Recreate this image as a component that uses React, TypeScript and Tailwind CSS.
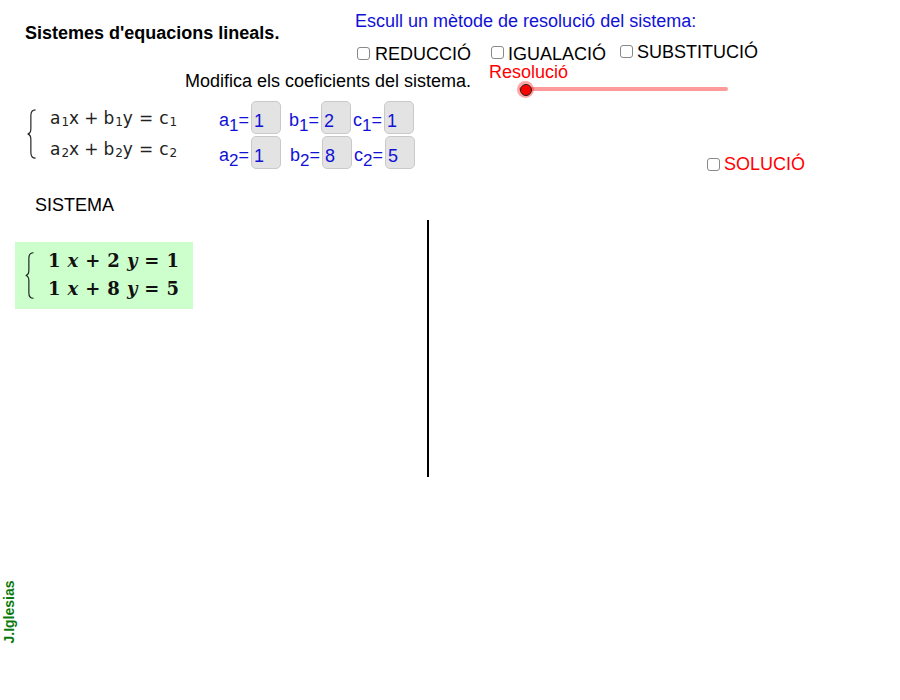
import React from "react";

const BLUE = "text-[#1111d6]";

function Brace({ className }: { className: string }) {
  return (
    <svg className={className} viewBox="0 0 10 50" preserveAspectRatio="none" fill="none">
      <path
        d="M9.5,0.8 C6,0.8 4.3,2.5 4.3,6.5 L4.3,19.5 C4.3,23 3,24.6 0.8,25 C3,25.4 4.3,27 4.3,30.5 L4.3,43.5 C4.3,47.5 6,49.2 9.5,49.2"
        stroke="#222"
        strokeWidth="1.3"
      />
    </svg>
  );
}

function CheckBox({ left, top }: { left: string; top: string }) {
  return <div className={`absolute ${left} ${top} w-[13px] h-[13px] border-[1.5px] border-[#888] rounded-[3px] bg-white`} />;
}

function Sub({ c }: { c: string }) {
  return <span className="text-[12px] relative top-[2px] ml-[1px]">{c}</span>;
}

function TemplateRow({ n }: { n: string }) {
  return (
    <div className="flex items-baseline text-[17px] leading-[20px] text-[#222] [font-family:'DejaVu_Sans',sans-serif]">
      <span>a</span>
      <Sub c={n} />
      <span>x</span>
      <span className="mx-[5px]">+</span>
      <span>b</span>
      <Sub c={n} />
      <span>y</span>
      <span className="mx-[6px]">=</span>
      <span>c</span>
      <Sub c={n} />
    </div>
  );
}

function Coef({ name, n, value, boxLeft, labelLeft, top }: { name: string; n: string; value: string; boxLeft: string; labelLeft: string; top: string }) {
  return (
    <>
      <div className={`absolute ${labelLeft} ${top} flex items-start text-[18px] leading-[20px] ${BLUE}`}>
        <span className="mt-[9px]">{name}</span>
        <span className="mt-[15px] text-[17px]">{n}</span>
        <span className="mt-[9px]">=</span>
      </div>
      <div className={`absolute ${boxLeft} ${top} w-[30px] h-[33px] rounded-[5px] bg-[#e3e3e3] border border-[#c9c9c9] pl-[2px] pt-[9px] text-[18px] leading-[20px] ${BLUE}`}>
        {value}
      </div>
    </>
  );
}

function SysRow({ a, b, c }: { a: string; b: string; c: string }) {
  return (
    <div className="flex items-baseline text-[18px] leading-[28px] font-bold text-[#111] [font-family:'DejaVu_Serif',serif]">
      <span>{a}</span>
      <span className="ml-[7px] italic">x</span>
      <span className="mx-[7px]">+</span>
      <span>{b}</span>
      <span className="ml-[7px] italic">y</span>
      <span className="mx-[7px]">=</span>
      <span>{c}</span>
    </div>
  );
}

export default function App() {
  return (
    <div className="relative w-[900px] h-[700px] bg-white overflow-hidden [font-family:'Liberation_Sans',Arial,sans-serif] text-[18px] leading-[18px] text-black">
      <div className="absolute left-[25px] top-[24px] font-bold">Sistemes d'equacions lineals.</div>
      <div className={`absolute left-[355px] top-[12px] ${BLUE}`}>Escull un mètode de resolució del sistema:</div>

      <CheckBox left="left-[357px]" top="top-[47px]" />
      <div className="absolute left-[375px] top-[45px]">REDUCCIÓ</div>
      <CheckBox left="left-[491px]" top="top-[46px]" />
      <div className="absolute left-[508px] top-[45px]">IGUALACIÓ</div>
      <CheckBox left="left-[620px]" top="top-[45px]" />
      <div className="absolute left-[637px] top-[43px]">SUBSTITUCIÓ</div>

      <div className="absolute left-[185px] top-[72px]">Modifica els coeficients del sistema.</div>
      <div className="absolute left-[489px] top-[63px] text-[#ff0000]">Resolució</div>

      {/* slider */}
      <div className="absolute left-[519px] top-[87px] w-[209px] h-[4px] rounded-full bg-[#ff9a9a]" />
      <div className="absolute left-[517px] top-[81px] w-[17px] h-[17px] rounded-full bg-[#ff0000]/35" />
      <div className="absolute left-[519.5px] top-[83.5px] w-[12px] h-[12px] rounded-full bg-[#ff0000] border-[1.5px] border-[#222]" />

      {/* template system */}
      <Brace className="absolute left-[27px] top-[109px] w-[9px] h-[50px]" />
      <div className="absolute left-[50px] top-[108px] flex flex-col gap-[9px]">
        <TemplateRow n="1" />
        <TemplateRow n="2" />
      </div>

      <Coef name="a" n="1" value="1" labelLeft="left-[219px]" boxLeft="left-[251px]" top="top-[101px]" />
      <Coef name="b" n="1" value="2" labelLeft="left-[289px]" boxLeft="left-[321px]" top="top-[101px]" />
      <Coef name="c" n="1" value="1" labelLeft="left-[353px]" boxLeft="left-[384px]" top="top-[101px]" />
      <Coef name="a" n="2" value="1" labelLeft="left-[219px]" boxLeft="left-[251px]" top="top-[136px]" />
      <Coef name="b" n="2" value="8" labelLeft="left-[290px]" boxLeft="left-[322px]" top="top-[136px]" />
      <Coef name="c" n="2" value="5" labelLeft="left-[354px]" boxLeft="left-[385px]" top="top-[136px]" />

      <CheckBox left="left-[707px]" top="top-[158px]" />
      <div className="absolute left-[724px] top-[155px] text-[#ff0000]">SOLUCIÓ</div>

      <div className="absolute left-[35px] top-[196px]">SISTEMA</div>

      <div className="absolute left-[15px] top-[242px] w-[178px] h-[67px] bg-[#ccffcc] flex items-center pl-[10px]">
        <Brace className="w-[9px] h-[47px]" />
        <div className="ml-[14px] -mt-[2px] flex flex-col">
          <SysRow a="1" b="2" c="1" />
          <SysRow a="1" b="8" c="5" />
        </div>
      </div>

      <div className="absolute left-[427px] top-[220px] w-[1.5px] h-[257px] bg-black" />

      <div className="absolute left-[-23px] top-[604px] w-[64px] h-[16px] -rotate-90 flex items-center justify-center text-[14px] leading-[16px] font-bold text-[#0a7a0a] whitespace-nowrap">
        J.Iglesias
      </div>
    </div>
  );
}
